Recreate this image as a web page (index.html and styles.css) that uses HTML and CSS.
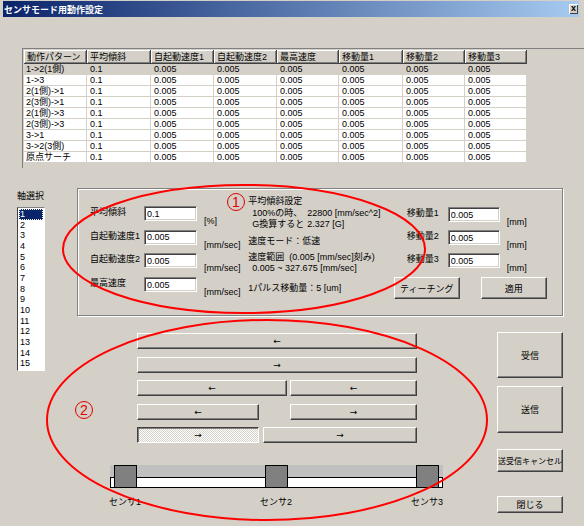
FILE: index.html
```html
<!DOCTYPE html>
<html lang="ja">

<head>
    <meta charset="UTF-8">
    <title>センサモード用動作設定</title>
    <link rel="stylesheet" href="styles.css">
</head>

<body>
    <div class="window">
        <div class="titlebar">
            <span class="title">センサモード用動作設定</span>
            <span class="close">x</span>
        </div>

        <div class="grid">
            <table class="pattern-table">
                <colgroup>
                    <col style="width:63px"><col style="width:64px"><col style="width:63px"><col style="width:63px">
                    <col style="width:62px"><col style="width:64px"><col style="width:62px"><col style="width:62px">
                </colgroup>
                <thead>
                    <tr>
                        <th>動作パターン</th><th>平均傾斜</th><th>自起動速度1</th><th>自起動速度2</th>
                        <th>最高速度</th><th>移動量1</th><th>移動量2</th><th>移動量3</th>
                    </tr>
                </thead>
                <tbody>
                    <tr class="current"><td>1-&gt;2(1側)</td><td>0.1</td><td>0.005</td><td>0.005</td><td>0.005</td><td>0.005</td><td>0.005</td><td>0.005</td></tr>
                    <tr><td>1-&gt;3</td><td>0.1</td><td>0.005</td><td>0.005</td><td>0.005</td><td>0.005</td><td>0.005</td><td>0.005</td></tr>
                    <tr><td>2(1側)-&gt;1</td><td>0.1</td><td>0.005</td><td>0.005</td><td>0.005</td><td>0.005</td><td>0.005</td><td>0.005</td></tr>
                    <tr><td>2(3側)-&gt;1</td><td>0.1</td><td>0.005</td><td>0.005</td><td>0.005</td><td>0.005</td><td>0.005</td><td>0.005</td></tr>
                    <tr><td>2(1側)-&gt;3</td><td>0.1</td><td>0.005</td><td>0.005</td><td>0.005</td><td>0.005</td><td>0.005</td><td>0.005</td></tr>
                    <tr><td>2(3側)-&gt;3</td><td>0.1</td><td>0.005</td><td>0.005</td><td>0.005</td><td>0.005</td><td>0.005</td><td>0.005</td></tr>
                    <tr><td>3-&gt;1</td><td>0.1</td><td>0.005</td><td>0.005</td><td>0.005</td><td>0.005</td><td>0.005</td><td>0.005</td></tr>
                    <tr><td>3-&gt;2(3側)</td><td>0.1</td><td>0.005</td><td>0.005</td><td>0.005</td><td>0.005</td><td>0.005</td><td>0.005</td></tr>
                    <tr><td>原点サーチ</td><td>0.1</td><td>0.005</td><td>0.005</td><td>0.005</td><td>0.005</td><td>0.005</td><td>0.005</td></tr>
                </tbody>
            </table>
        </div>

        <div class="main">
            <div class="axis">
                <div class="axis-label">軸選択</div>
                <ul class="axis-list">
                    <li class="selected">1</li><li>2</li><li>3</li><li>4</li><li>5</li>
                    <li>6</li><li>7</li><li>8</li><li>9</li><li>10</li>
                    <li>11</li><li>12</li><li>13</li><li>14</li><li>15</li>
                </ul>
            </div>

            <div class="work">
                <div class="panel">
                    <div class="col-fields">
                        <div class="field">
                            <span class="field-label">平均傾斜</span>
                            <input class="edit" type="text" value="0.1">
                            <span class="unit">[%]</span>
                        </div>
                        <div class="field">
                            <span class="field-label">自起動速度1</span>
                            <input class="edit" type="text" value="0.005">
                            <span class="unit">[mm/sec]</span>
                        </div>
                        <div class="field">
                            <span class="field-label">自起動速度2</span>
                            <input class="edit" type="text" value="0.005">
                            <span class="unit">[mm/sec]</span>
                        </div>
                        <div class="field">
                            <span class="field-label">最高速度</span>
                            <input class="edit" type="text" value="0.005">
                            <span class="unit">[mm/sec]</span>
                        </div>
                    </div>

                    <div class="col-info">
                        <div class="info-line">平均傾斜設定</div>
                        <div class="info-line indent"><span class="info-key">100%の時、</span>22800 [mm/sec^2]</div>
                        <div class="info-line indent"><span class="info-key">G換算すると</span>2.327 [G]</div>
                        <div class="info-line mode">速度モード：低速</div>
                        <div class="info-line range">速度範囲&nbsp; (0.005 [mm/sec]刻み)</div>
                        <div class="info-line indent">0.005 ~ 327.675 [mm/sec]</div>
                        <div class="info-line pulse">1パルス移動量：5 [um]</div>
                    </div>

                    <div class="col-move">
                        <div class="field">
                            <span class="move-label">移動量1</span>
                            <input class="edit" type="text" value="0.005">
                            <span class="unit">[mm]</span>
                        </div>
                        <div class="field">
                            <span class="move-label">移動量2</span>
                            <input class="edit" type="text" value="0.005">
                            <span class="unit">[mm]</span>
                        </div>
                        <div class="field">
                            <span class="move-label">移動量3</span>
                            <input class="edit" type="text" value="0.005">
                            <span class="unit">[mm]</span>
                        </div>
                        <div class="panel-buttons">
                            <button type="button" class="btn">ティーチング</button>
                            <button type="button" class="btn">適用</button>
                        </div>
                    </div>
                </div>

                <div class="lower">
                    <div class="track-area">
                        <div class="arrows">
                            <div class="arrow-row">
                                <button type="button" class="btn arrow w-full">←</button>
                            </div>
                            <div class="arrow-row">
                                <button type="button" class="btn arrow w-full">→</button>
                            </div>
                            <div class="arrow-row">
                                <button type="button" class="btn arrow w-150">←</button>
                                <button type="button" class="btn arrow w-127">←</button>
                            </div>
                            <div class="arrow-row">
                                <button type="button" class="btn arrow w-122">←</button>
                                <button type="button" class="btn arrow w-127">→</button>
                            </div>
                            <div class="arrow-row">
                                <button type="button" class="btn arrow w-122 pressed">→</button>
                                <button type="button" class="btn arrow w-154">→</button>
                            </div>
                        </div>

                        <div class="track">
                            <div class="rail-top"></div>
                            <div class="rail-bottom"></div>
                            <div class="sensors">
                                <div class="sensor"></div>
                                <div class="sensor"></div>
                                <div class="sensor"></div>
                            </div>
                        </div>
                        <div class="sensor-labels">
                            <span>センサ1</span>
                            <span>センサ2</span>
                            <span>センサ3</span>
                        </div>
                    </div>

                    <div class="side-buttons">
                        <button type="button" class="btn side-recv">受信</button>
                        <button type="button" class="btn side-send">送信</button>
                        <button type="button" class="btn side-cancel">送受信キャンセル</button>
                        <button type="button" class="btn side-close">閉じる</button>
                    </div>
                </div>
            </div>
        </div>

        <svg class="marks" width="584" height="526" viewBox="0 0 584 526">
            <ellipse cx="244" cy="249" rx="181" ry="64" />
            <ellipse cx="267" cy="420" rx="220" ry="100" />
            <circle cx="236" cy="202" r="8.5" />
            <text x="236" y="207" text-anchor="middle">1</text>
            <circle cx="84" cy="410" r="8.5" />
            <text x="84" y="415" text-anchor="middle">2</text>
        </svg>
    </div>
</body>

</html>
```

FILE: styles.css
```css
body {
    margin: 0;
    background: #d4d0c8;
    font-family: "Liberation Sans", "Noto Sans CJK JP", sans-serif;
    font-size: 9px;
    color: #000;
}

.window {
    position: relative;
    width: 584px;
    height: 526px;
    overflow: hidden;
    background: #d4d0c8;
}

/* title bar */
.titlebar {
    display: flex;
    align-items: center;
    justify-content: space-between;
    height: 16px;
    margin: 1px 5px 0 3px;
    padding: 0 1px 0 1px;
    background: linear-gradient(to right, #0a246a, #a6caf0);
}

.title {
    color: #fff;
    font-weight: bold;
    font-size: 9px;
}

.close {
    width: 9px;
    height: 10px;
    line-height: 9px;
    text-align: center;
    font-size: 9px;
    font-weight: bold;
    background: #d4d0c8;
    box-shadow: inset 1px 1px #fff, inset -1px -1px #404040;
}

/* pattern grid */
.grid {
    height: 120px;
    margin: 31px 0 0 22px;
    padding: 1px 0 0 1px;
    border-top: 1px solid #808080;
    border-left: 1px solid #808080;
    box-sizing: border-box;
}

.pattern-table {
    table-layout: fixed;
    width: 503px;
    border-collapse: separate;
    border-spacing: 0;
    background: #fff;
    font-size: 9px;
}

.pattern-table th {
    height: 14px;
    padding: 0 0 0 3px;
    text-align: left;
    font-weight: normal;
    background: #d4d0c8;
    box-sizing: border-box;
    border-right: 1px solid #404040;
    border-bottom: 1px solid #404040;
    box-shadow: inset 1px 1px #fff, inset -1px -1px #808080;
    white-space: nowrap;
    overflow: hidden;
}

.pattern-table td {
    height: 11px;
    padding: 0 0 0 3px;
    line-height: 10px;
    box-sizing: border-box;
    border-right: 1px solid #d4d0c8;
    border-bottom: 1px solid #d4d0c8;
    white-space: nowrap;
    overflow: hidden;
}

.pattern-table td:first-child {
    padding-left: 2px;
}

.pattern-table tr.current td {
    background: #d4d0c8;
}

/* axis + work area */
.main {
    display: flex;
    margin-top: 20px;
}

.axis {
    width: 28px;
    margin-left: 17px;
}

.axis-label {
    margin-top: 2px;
    line-height: 12px;
    white-space: nowrap;
}

.axis-list {
    list-style: none;
    height: 164px;
    margin: 5px 0 0 0;
    padding: 1px 1px 0 1px;
    box-sizing: border-box;
    background: #fff;
    border-top: 1px solid #808080;
    border-left: 1px solid #404040;
    border-right: 1px solid #fff;
    border-bottom: 1px solid #fff;
}

.axis-list li {
    height: 10.67px;
    line-height: 10.67px;
    padding-left: 1px;
}

.axis-list li.selected {
    background: #0a246a;
    color: #fff;
    outline: 1px dotted #fff;
    outline-offset: -1px;
}

.work {
    margin-left: 32px;
}

.panel {
    display: flex;
    width: 486px;
    height: 128px;
    box-sizing: border-box;
    border: 1px solid #808080;
    box-shadow: inset 1px 1px #fff, 1px 1px #fff;
}

.col-fields {
    width: 160px;
    margin-left: 12px;
    padding-top: 17px;
}

.field {
    display: flex;
    align-items: flex-start;
    height: 15px;
    margin-bottom: 8.7px;
}

.field-label {
    width: 54px;
    line-height: 12px;
    white-space: nowrap;
}

.edit {
    width: 53px;
    height: 15px;
    margin: 0;
    padding: 0 0 0 2px;
    box-sizing: border-box;
    font: inherit;
    color: #000;
    background: #fff;
    border: 1px solid;
    border-color: #808080 #fff #fff #808080;
    box-shadow: inset 1px 1px #404040, inset -1px -1px #d4d0c8;
    outline: none;
}

.unit {
    margin: 9px 0 0 7px;
    line-height: 12px;
    white-space: nowrap;
}

.col-info {
    width: 147px;
    padding-top: 7px;
}

.info-line {
    line-height: 11.5px;
    white-space: nowrap;
}

.info-line.indent {
    padding-left: 4px;
}

.info-key {
    display: inline-block;
    width: 55px;
}

.info-line.mode {
    margin-top: 5px;
}

.info-line.range {
    margin-top: 4.5px;
}

.info-line.pulse {
    margin-top: 8px;
}

.col-move {
    width: 170px;
    padding-top: 18px;
}

.col-move .field {
    margin-bottom: 8px;
    margin-left: 13px;
}

.move-label {
    width: 41px;
    line-height: 12px;
    white-space: nowrap;
}

.col-move .edit {
    width: 52px;
}

.panel-buttons {
    display: flex;
    gap: 21px;
    margin-top: 9px;
}

/* classic buttons */
.btn {
    margin: 0;
    padding: 0;
    font: inherit;
    color: #000;
    background: #d4d0c8;
    box-sizing: border-box;
    border: 1px solid;
    border-color: #fff #404040 #404040 #fff;
    box-shadow: inset -1px -1px #808080;
    cursor: pointer;
}

.panel-buttons .btn {
    width: 66px;
    height: 22px;
}

/* lower area */
.lower {
    display: flex;
    margin-top: 16px;
}

.track-area {
    width: 333px;
    margin-left: 33px;
}

.arrows {
    width: 280px;
    margin: 1px 0 0 27px;
}

.arrow-row {
    display: flex;
    justify-content: space-between;
    height: 16px;
    margin-bottom: 7.5px;
}

.arrow-row:last-child {
    margin-bottom: 0;
}

.arrow {
    height: 16px;
    line-height: 12px;
    font-family: "DejaVu Sans", sans-serif;
    font-size: 9px;
}

.w-full { width: 280px; }
.w-150 { width: 150px; }
.w-127 { width: 127px; }
.w-122 { width: 122px; }
.w-154 { width: 154px; }

.arrow.pressed {
    border-color: #404040 #fff #fff #404040;
    box-shadow: inset 1px 1px #808080;
    background: repeating-conic-gradient(#fff 0 25%, #d4d0c8 0 50%) 0 0 / 2px 2px;
}

.track {
    display: grid;
    grid-template-rows: 12px 11px;
    margin-top: 22px;
}

.rail-top {
    grid-row: 1;
    grid-column: 1;
    background: #c0c0c0;
}

.rail-bottom {
    grid-row: 2;
    grid-column: 1;
    background: #fff;
    border: 1px solid #000;
}

.sensors {
    grid-row: 1 / 3;
    grid-column: 1;
    display: flex;
    justify-content: space-between;
    padding: 0 4px;
}

.sensor {
    width: 23px;
    height: 23px;
    box-sizing: border-box;
    background: #808080;
    border: 1px solid #000;
}

.sensor-labels {
    display: flex;
    justify-content: space-between;
    width: 334px;
    margin: 8px 0 0 -1px;
    line-height: 12px;
}

.side-buttons {
    display: flex;
    flex-direction: column;
    width: 66px;
    margin-left: 54px;
}

.side-buttons .btn {
    width: 66px;
}

.side-recv {
    height: 46px;
}

.side-send {
    height: 47px;
    margin-top: 8px;
}

.side-cancel {
    height: 23px;
    margin-top: 16px;
    font-size: 8px;
    white-space: nowrap;
}

.side-close {
    height: 17px;
    margin-top: 24px;
}

/* red hand annotations */
.marks {
    position: absolute;
    top: 0;
    left: 0;
    pointer-events: none;
}

.marks ellipse {
    fill: none;
    stroke: #ff0000;
    stroke-width: 2;
}

.marks circle {
    fill: none;
    stroke: #e00000;
    stroke-width: 1;
}

.marks text {
    fill: #e00000;
    font-family: "Liberation Sans", sans-serif;
    font-size: 14px;
}
```
